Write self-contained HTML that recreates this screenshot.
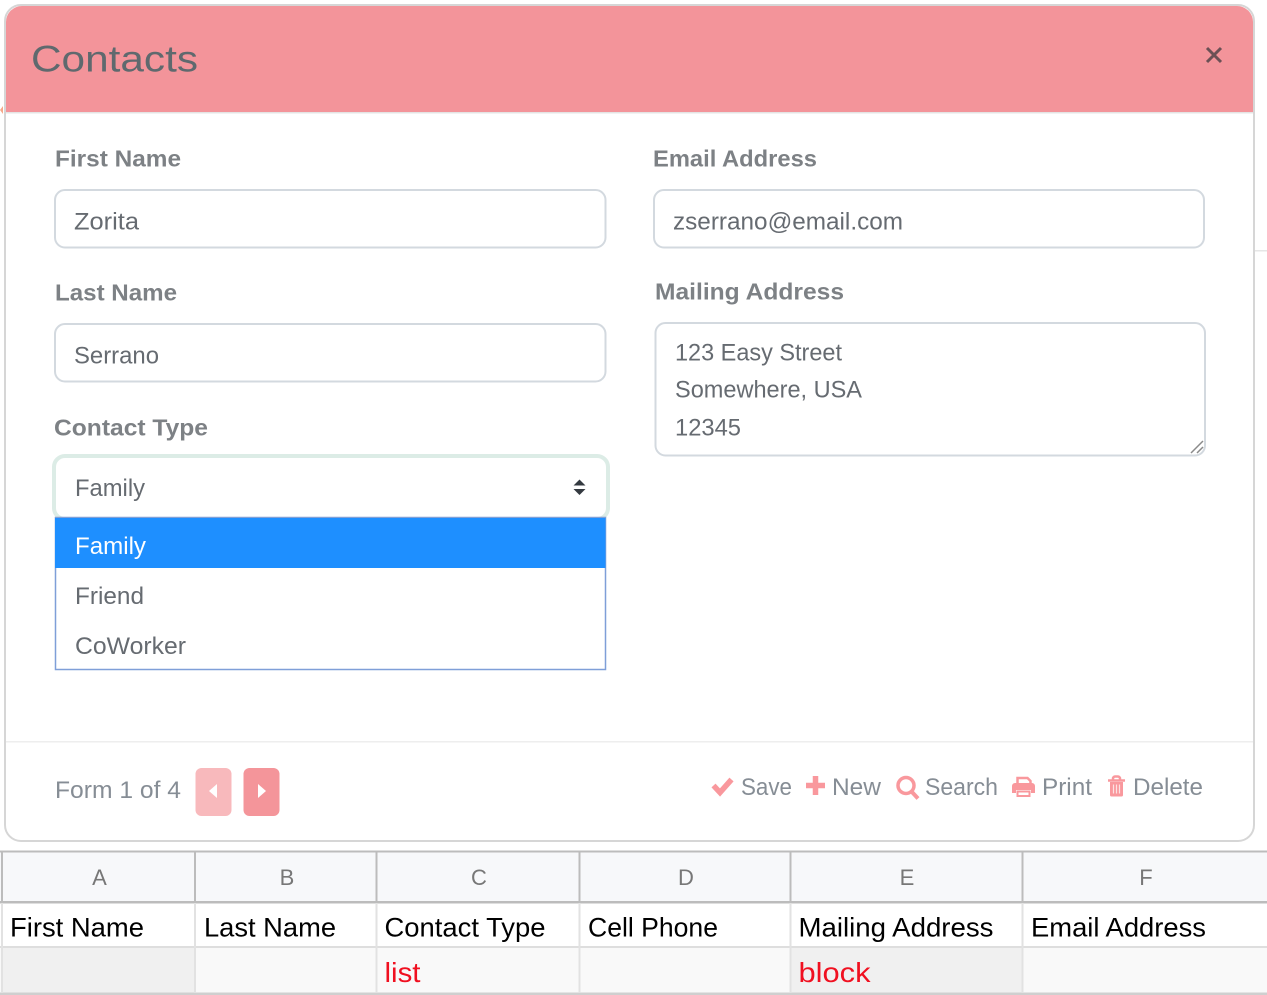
<!DOCTYPE html>
<html><head><meta charset="utf-8"><title>Contacts</title>
<style>
html,body{margin:0;padding:0;background:#fff;width:1267px;height:995px;overflow:hidden}
svg{display:block}
text{font-family:"Liberation Sans",sans-serif}
.l{font-weight:bold;font-size:23px;fill:#7d8185}
.v{font-size:24px;fill:#666b71}
.b{font-size:24px;fill:#868d95}
.h{font-size:22px;fill:#777;text-anchor:middle}
.c{font-size:27px;fill:#000}
.r{font-size:28px;fill:#f01020}
</style></head><body>
<svg width="1267" height="995" viewBox="0 0 1267 995" xmlns="http://www.w3.org/2000/svg">
<rect x="1254" y="250" width="13" height="1.5" fill="#e6e6e6"/>
<path d="M0 110l3-4v8z" fill="#f6a98a"/>
<rect x="5" y="5" width="1249" height="836" rx="16" fill="#fff" stroke="#d6d6d6" stroke-width="2"/>
<path d="M6 112V22a16 16 0 0 1 16-16H1237a16 16 0 0 1 16 16V112z" fill="#f3949a"/>
<rect x="6" y="112" width="1247" height="1.5" fill="#e4e4e4"/>
<text x="31" y="71.500" font-size="37" fill="#5f696e" textLength="167" lengthAdjust="spacingAndGlyphs">Contacts</text>
<path d="M1207 48l14 14M1221 48l-14 14" stroke="#6b5055" stroke-width="3" fill="none"/>

<text class="l" x="55" y="166.500" textLength="126" lengthAdjust="spacingAndGlyphs">First Name</text>
<text class="l" x="653" y="166.500" textLength="164" lengthAdjust="spacingAndGlyphs">Email Address</text>
<text class="l" x="55" y="300.500" textLength="122" lengthAdjust="spacingAndGlyphs">Last Name</text>
<text class="l" x="655" y="299.500" textLength="189" lengthAdjust="spacingAndGlyphs">Mailing Address</text>
<text class="l" x="54" y="435.500" textLength="154" lengthAdjust="spacingAndGlyphs">Contact Type</text>

<g fill="#fff" stroke="#d3d9df" stroke-width="2">
<rect x="55" y="190" width="550.500" height="57.500" rx="10"/>
<rect x="654" y="190" width="550" height="57.500" rx="10"/>
<rect x="55" y="324" width="550.500" height="57.500" rx="10"/>
<rect x="655.500" y="323" width="549.500" height="132.500" rx="10"/>
</g>
<text class="v" x="74" y="229.500" textLength="65" lengthAdjust="spacingAndGlyphs">Zorita</text>
<text class="v" x="673" y="229.500" textLength="230" lengthAdjust="spacingAndGlyphs">zserrano@email.com</text>
<text class="v" x="74" y="363.500" textLength="85" lengthAdjust="spacingAndGlyphs">Serrano</text>
<text class="v" x="675" y="360.500" textLength="167" lengthAdjust="spacingAndGlyphs">123 Easy Street</text>
<text class="v" x="675" y="397.500" textLength="187" lengthAdjust="spacingAndGlyphs">Somewhere, USA</text>
<text class="v" x="675" y="435.500" textLength="66" lengthAdjust="spacingAndGlyphs">12345</text>
<path d="M1191 453l12-12M1197 453l6-6" stroke="#8a8a8a" stroke-width="1.500" fill="none"/>

<rect x="54" y="456" width="554" height="63" rx="11" fill="#fff" stroke="#dcece6" stroke-width="4"/>
<text class="v" x="75" y="496" textLength="70" lengthAdjust="spacingAndGlyphs">Family</text>
<path d="M579.500 479.500l6 6h-12zM579.500 495l6-6h-12z" fill="#343a40"/>

<rect x="55.500" y="517.500" width="550" height="152" fill="#fff" stroke="#7f9fd8" stroke-width="1.500"/>
<rect x="55" y="518" width="550.500" height="50" fill="#1e8fff"/>
<text x="75" y="554" font-size="24" fill="#fff" textLength="71" lengthAdjust="spacingAndGlyphs">Family</text>
<text class="v" x="75" y="604" textLength="69" lengthAdjust="spacingAndGlyphs">Friend</text>
<text class="v" x="75" y="654" textLength="111" lengthAdjust="spacingAndGlyphs">CoWorker</text>

<rect x="6" y="741" width="1247" height="1.500" fill="#eeeeee"/>
<text class="b" x="55" y="798" textLength="126" lengthAdjust="spacingAndGlyphs">Form 1 of 4</text>
<rect x="195.500" y="768" width="36" height="48" rx="6" fill="#f8b9bc"/>
<rect x="243.500" y="768" width="36" height="48" rx="6" fill="#f4959a"/>
<path d="M217 784v14l-8-7z" fill="#fff"/>
<path d="M258 784v14l8-7z" fill="#fff"/>

<path d="M713.500 785.500l6.500 7 11.500-13" stroke="#f9989d" stroke-width="5.500" fill="none"/>
<text class="b" x="741" y="795" textLength="51" lengthAdjust="spacingAndGlyphs">Save</text>
<path d="M815.500 776v19M806 785.500h19" stroke="#f9989d" stroke-width="5.500" fill="none"/>
<text class="b" x="832" y="795" textLength="49" lengthAdjust="spacingAndGlyphs">New</text>
<circle cx="906" cy="785.500" r="8" stroke="#f9989d" stroke-width="3.500" fill="none"/>
<path d="M911.500 791.500l6.500 7" stroke="#f9989d" stroke-width="4" fill="none"/>
<text class="b" x="925" y="795" textLength="73" lengthAdjust="spacingAndGlyphs">Search</text>
<path d="M1017.500 784v-6h10l3 3v3" stroke="#f9989d" stroke-width="2.500" fill="none"/>
<path d="M1015 783h17a3 3 0 0 1 3 3v7h-4v-3h-15v3h-4v-7a3 3 0 0 1 3-3z" fill="#f9989d"/>
<rect x="1017.500" y="791.500" width="12" height="4.500" fill="none" stroke="#f9989d" stroke-width="2"/>
<text class="b" x="1042" y="795" textLength="50" lengthAdjust="spacingAndGlyphs">Print</text>
<path d="M1108 780.500h17M1113 780.500v-2a2 2 0 0 1 2-2h3a2 2 0 0 1 2 2v2" stroke="#f9989d" stroke-width="2.500" fill="none"/>
<path d="M1110 782h13v13a1.500 1.500 0 0 1-1.500 1.500h-10a1.500 1.500 0 0 1-1.500-1.500z" fill="#f9989d"/>
<path d="M1113.500 784.500v9M1116.500 784.500v9M1119.500 784.500v9" stroke="#fde2e3" stroke-width="1.200" fill="none"/>
<text class="b" x="1133" y="795" textLength="70" lengthAdjust="spacingAndGlyphs">Delete</text>

<rect x="0" y="852" width="1267" height="49" fill="#f7f8fa"/>
<rect x="0" y="903" width="1267" height="44" fill="#fff"/>
<rect x="0" y="948" width="1267" height="45" fill="#f9f9f9"/>
<rect x="2" y="948" width="193" height="45" fill="#f0f0f0"/>
<rect x="791" y="948" width="232" height="45" fill="#f0f0f0"/>
<rect x="0" y="850.500" width="1267" height="2" fill="#bcbcbc"/>
<rect x="0" y="901" width="1267" height="2.500" fill="#bcbcbc"/>
<rect x="0" y="946" width="1267" height="2" fill="#dedede"/>
<rect x="0" y="992.500" width="1267" height="2.500" fill="#cfcfcf"/>
<g fill="#bcbcbc">
<rect x="1" y="851" width="2" height="51"/><rect x="194" y="851" width="2" height="51"/><rect x="375.500" y="851" width="2" height="51"/><rect x="578.500" y="851" width="2" height="51"/><rect x="789.500" y="851" width="2" height="51"/><rect x="1021.500" y="851" width="2" height="51"/>
</g>
<g fill="#e2e2e2">
<rect x="1" y="903" width="2" height="90"/><rect x="194" y="903" width="2" height="90"/><rect x="375.500" y="903" width="2" height="90"/><rect x="578.500" y="903" width="2" height="90"/><rect x="789.500" y="903" width="2" height="90"/><rect x="1021.500" y="903" width="2" height="90"/>
</g>
<text class="h" x="99.500" y="885">A</text>
<text class="h" x="287" y="885">B</text>
<text class="h" x="479" y="885">C</text>
<text class="h" x="686" y="885">D</text>
<text class="h" x="907" y="885">E</text>
<text class="h" x="1146" y="885">F</text>
<text class="c" x="10" y="936.500" textLength="134" lengthAdjust="spacingAndGlyphs">First Name</text>
<text class="c" x="204" y="936.500" textLength="132" lengthAdjust="spacingAndGlyphs">Last Name</text>
<text class="c" x="384.500" y="936.500" textLength="161" lengthAdjust="spacingAndGlyphs">Contact Type</text>
<text class="c" x="588" y="936.500" textLength="130" lengthAdjust="spacingAndGlyphs">Cell Phone</text>
<text class="c" x="798.500" y="936.500" textLength="195" lengthAdjust="spacingAndGlyphs">Mailing Address</text>
<text class="c" x="1031" y="936.500" textLength="175" lengthAdjust="spacingAndGlyphs">Email Address</text>
<text class="r" x="384.500" y="982" textLength="36" lengthAdjust="spacingAndGlyphs">list</text>
<text class="r" x="798.500" y="982" textLength="72" lengthAdjust="spacingAndGlyphs">block</text>
</svg>
</body></html>
